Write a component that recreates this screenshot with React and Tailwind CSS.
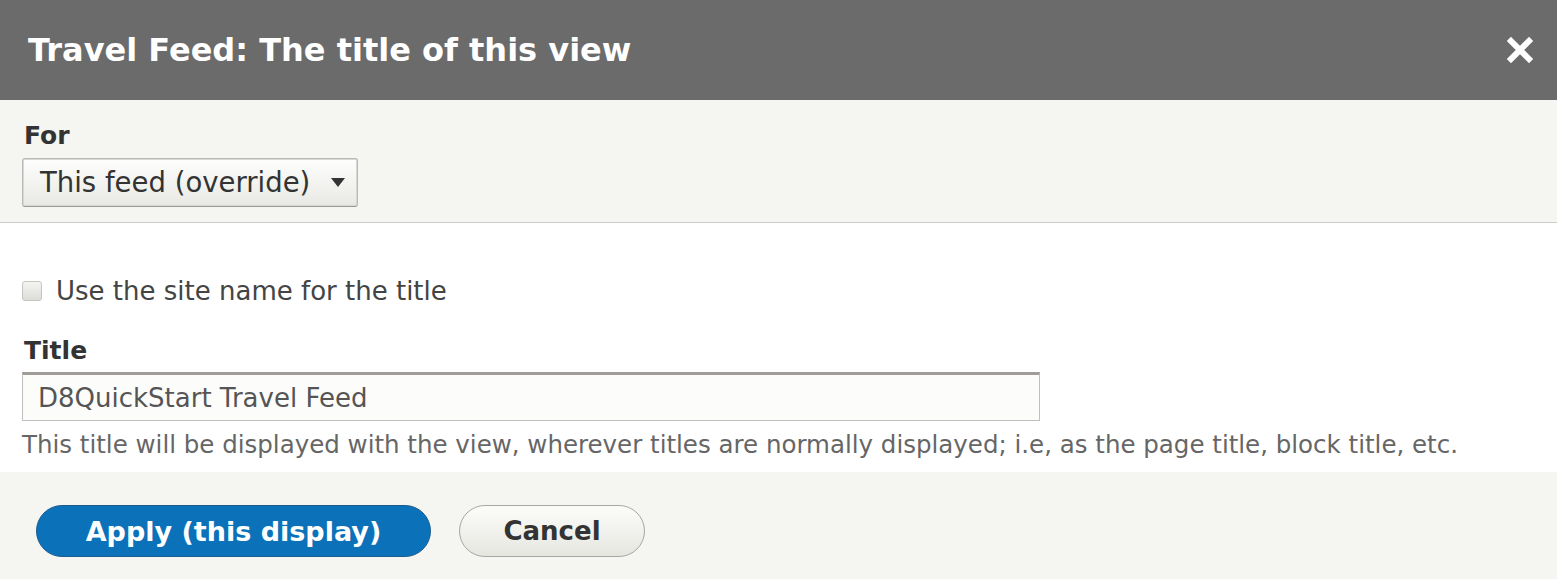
export default function App() {
  return (
    <div className="w-[1557px] h-[579px] overflow-hidden bg-white font-['DejaVu_Sans',sans-serif] text-[#333]">
      {/* Dialog title bar */}
      <div className="h-[100px] bg-[#6b6b6b] flex items-center justify-between pl-[28px] pr-[24px]">
        <h1 className="text-white font-bold text-[32px] leading-none">Travel Feed: The title of this view</h1>
        <button aria-label="Close" className="text-white">
          <svg width="26" height="26" viewBox="0 0 26 26">
            <path d="M4 4L22 22M22 4L4 22" stroke="currentColor" strokeWidth="6" strokeLinecap="square" />
          </svg>
        </button>
      </div>

      {/* Override selector */}
      <div className="bg-[#f5f5f2] border-b border-[#cccccc] pt-[21px] pb-[15px] px-[22px]">
        <label className="block font-bold text-[25px] leading-[30px] mb-[7px] pl-[2px]">For</label>
        <div className="w-[336px] h-[49px] rounded-[3px] border border-[#b8b8b8] border-b-[#999] bg-gradient-to-b from-[#fefefe] to-[#e8e8e3] flex items-center justify-between pl-[17px] pr-[12px] shadow-[inset_0_0_0_1px_#d8d8d4]">
          <span className="text-[27.5px] leading-none">This feed (override)</span>
          <svg width="14" height="9" viewBox="0 0 14 9">
            <path d="M0 0H14L7 9Z" fill="#333" />
          </svg>
        </div>
      </div>

      {/* Form body */}
      <div className="bg-white px-[22px] pt-[53px] h-[249px]">
        <div className="flex items-center gap-[14px]">
          <span className="w-[20px] h-[20px] rounded-[3px] border border-[#c4c4c0] bg-gradient-to-b from-[#f4f4f2] to-[#dcdcd8]" />
          <span className="text-[26px] leading-[30px] text-[#444]">Use the site name for the title</span>
        </div>
        <label className="block font-bold text-[25px] leading-[30px] mt-[30px] mb-[6px] pl-[2px]">Title</label>
        <div className="w-[1018px] h-[49px] border border-[#c0c0c0] border-t-[3px] border-t-[#a09c98] bg-[#fcfcfa] flex items-center pl-[15px]">
          <span className="text-[26px] leading-none text-[#555]">D8QuickStart Travel Feed</span>
        </div>
        <p className="text-[24.5px] leading-[30px] text-[#666] mt-[9px]">
          This title will be displayed with the view, wherever titles are normally displayed; i.e, as the page title, block title, etc.
        </p>
      </div>

      {/* Actions */}
      <div className="bg-[#f5f5f2] h-[107px] flex items-center gap-[28px] pl-[36px] pt-[11px]">
        <button className="w-[395px] h-[52px] rounded-full bg-[#0b72b9] border border-[#1e5c90] text-white font-bold text-[27px] leading-none">
          Apply (this display)
        </button>
        <button className="w-[186px] h-[52px] rounded-full border border-[#a6a6a6] bg-gradient-to-b from-[#fcfcfa] to-[#e6e6e1] text-[#333] font-bold text-[26px] leading-none">
          Cancel
        </button>
      </div>
    </div>
  );
}
